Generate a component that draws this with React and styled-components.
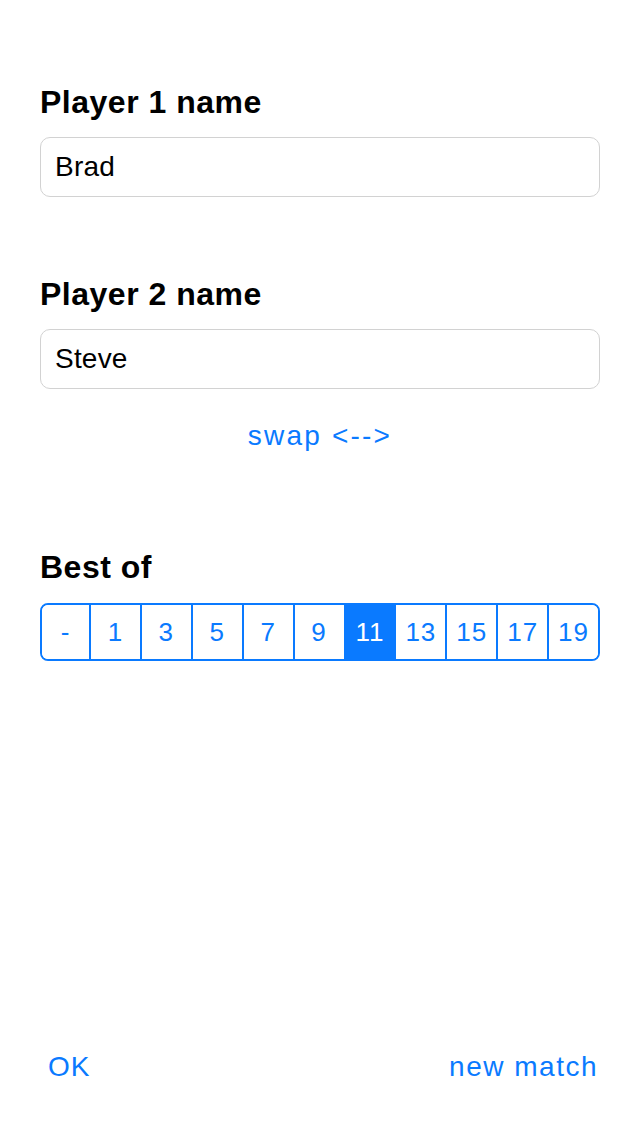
import React, { useState } from 'react';
import styled, { createGlobalStyle } from 'styled-components';

const blue = '#0a7aff';

const GlobalStyle = createGlobalStyle`
  html, body {
    margin: 0;
    padding: 0;
    background: #fff;
    font-family: "Liberation Sans", Arial, sans-serif;
  }
`;

const Screen = styled.div`
  box-sizing: border-box;
  height: 100vh;
  display: flex;
  flex-direction: column;
  padding: 82px 40px 49px 40px;
`;

const Label = styled.div`
  font-size: 32px;
  line-height: 40px;
  font-weight: bold;
  letter-spacing: 0.5px;
  color: #000;
  margin-top: ${(p) => p.$gap || 0}px;
`;

const Input = styled.input`
  box-sizing: border-box;
  width: 100%;
  height: 60px;
  margin-top: 15px;
  padding: 0 14px;
  border: 1.5px solid #d2d2d2;
  border-radius: 10px;
  font-family: inherit;
  font-size: 28px;
  letter-spacing: 0.2px;
  color: #000;
  outline: none;
`;

const LinkButton = styled.button`
  background: none;
  border: none;
  padding: 0;
  font-family: inherit;
  font-size: 28px;
  line-height: 40px;
  letter-spacing: ${(p) => p.$spacing ?? 1.5}px;
  color: ${blue};
  cursor: pointer;
`;

const SwapRow = styled.div`
  display: flex;
  justify-content: center;
  margin-top: 27px;
`;

const Segmented = styled.div`
  display: grid;
  grid-template-columns: 47px repeat(10, 1fr);
  height: 58px;
  margin-top: 16px;
  border: 2px solid ${blue};
  border-radius: 8px;
  overflow: hidden;
  box-sizing: border-box;
`;

const Segment = styled.div`
  display: flex;
  align-items: center;
  justify-content: center;
  font-size: 26px;
  letter-spacing: 1px;
  color: ${(p) => (p.$active ? '#fff' : blue)};
  background: ${(p) => (p.$active ? blue : '#fff')};
  border-left: ${(p) => (p.$first ? 'none' : `2px solid ${blue}`)};
`;

const Footer = styled.div`
  margin-top: auto;
  display: flex;
  justify-content: space-between;
  padding: 0 2px 0 8px;
`;

const options = ['-', '1', '3', '5', '7', '9', '11', '13', '15', '17', '19'];

export default function App() {
  const [p1, setP1] = useState('Brad');
  const [p2, setP2] = useState('Steve');
  const [best, setBest] = useState('11');

  return (
    <Screen>
      <GlobalStyle />
      <Label>Player 1 name</Label>
      <Input value={p1} onChange={(e) => setP1(e.target.value)} />
      <Label $gap={77}>Player 2 name</Label>
      <Input value={p2} onChange={(e) => setP2(e.target.value)} />
      <SwapRow>
        <LinkButton $spacing={2.2} onClick={() => { setP1(p2); setP2(p1); }}>swap &lt;--&gt;</LinkButton>
      </SwapRow>
      <Label $gap={91}>Best of</Label>
      <Segmented>
        {options.map((o, i) => (
          <Segment key={o} $first={i === 0} $active={best === o} onClick={() => setBest(o)}>
            {o}
          </Segment>
        ))}
      </Segmented>
      <Footer>
        <LinkButton $spacing={1}>OK</LinkButton>
        <LinkButton $spacing={1.5}>new match</LinkButton>
      </Footer>
    </Screen>
  );
}
